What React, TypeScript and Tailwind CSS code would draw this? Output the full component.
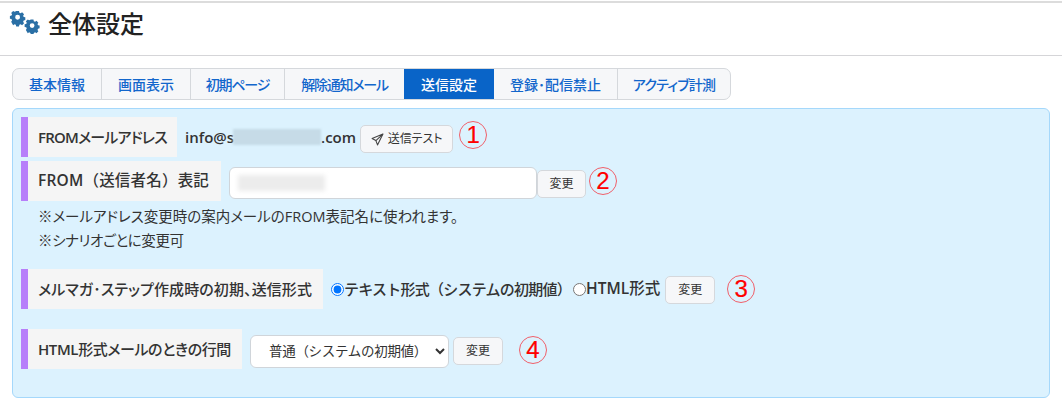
import React from "react";

const font = { fontFamily: '"Open Sans", "Noto Sans CJK JP", sans-serif' };

const tabs = [
  { t: "基本情報", w: "w-[89px]" },
  { t: "画面表示", w: "w-[89px]" },
  { t: "初期ページ", w: "w-[94px] tracking-[-1.2px]" },
  { t: "解除通知メール", w: "w-[119px] tracking-[-1.2px]" },
  { t: "送信設定", w: "w-[90px]", active: true },
  { t: "登録･配信禁止", w: "w-[124px]" },
  { t: "アクティブ計測", w: "w-[112px] tracking-[-0.8px]" },
];

function Label({ children, w, cls }: { children: React.ReactNode; w: string; cls?: string }) {
  return (
    <div className={`h-10 shrink-0 border-l-[7px] border-[#b77ffa] bg-[#f5f5f5] pl-[10px] flex items-center font-medium text-[#333] whitespace-nowrap ${cls ?? ""} ${w}`}>
      <span>{children}</span>
    </div>
  );
}

function Latin({ children }: { children: React.ReactNode }) {
  return <span className="font-semibold">{children}</span>;
}

function Btn({ children, cls }: { children: React.ReactNode; cls?: string }) {
  return (
    <button className={`h-[28px] rounded-[5px] border border-[#d5d8dc] bg-[#f6f7f9] text-[12px] text-[#333] flex items-center justify-center gap-1 [font-feature-settings:"palt"] ${cls ?? "w-[50px]"}`}>
      {children}
    </button>
  );
}

function Num({ children, cls }: { children: React.ReactNode; cls: string }) {
  return (
    <span className={`w-7 h-7 shrink-0 rounded-full border border-[#f0606a] text-[#f00] flex items-center justify-center text-[24px] leading-none [-webkit-text-stroke:0.2px_#f00] ${cls}`} style={{ fontFamily: '"Liberation Sans", sans-serif' }}>
      {children}
    </span>
  );
}

const gear = "M7 0h4l.5 2.4 1.9.8 2-1.3 2.8 2.8-1.3 2 .8 1.900 2.300.4v4l-2.300.5-.8 1.900 1.300 2-2.800 2.800-2-1.300-1.900.8-.5 2.300H7l-.5-2.300-1.900-.8-2 1.300L-.2 15.400l1.300-2-.8-1.900L-2 11V7l2.300-.4.800-1.900-1.300-2L2.600-.1l2 1.300 1.900-.8zM9 5.500a3.500 3.500 0 1 0 0 7 3.500 3.500 0 0 0 0-7z";

function Gears() {
  return (
    <svg width="31" height="24" viewBox="0 0 31 24" className="shrink-0 mt-[1px]" fill="#2a6fa5">
      <path fillRule="evenodd" d={gear} transform="translate(2.300 1) scale(.7)" />
      <path fillRule="evenodd" d={gear} transform="translate(17 9.500) scale(.68)" />
    </svg>
  );
}

export default function App() {
  return (
    <div className="w-[1062px] h-[420px] bg-white overflow-hidden" style={font}>
      <div className="h-[56px] border-b border-[#d5d5d8] relative">
        <div className="h-[3px] border-b-2 border-[#dcdcdc]" />
        <div className="absolute left-[898px] top-[1px] w-[46px] h-[2px] bg-[#dcdcdc]" />
        <div className="flex items-start pl-[9px] pt-[6px]">
          <Gears />
          <h1 className="ml-[8px] text-[24px] leading-[30px] font-medium text-[#222]">全体設定</h1>
        </div>
      </div>

      <div className="mt-3 ml-3 flex w-[719px] h-[32px] rounded-[7px] border border-[#d5d8dc] bg-[#f6f7f9] overflow-hidden">
        {tabs.map((x, i) => (
          <div
            key={x.t}
            className={`shrink-0 flex items-center justify-center text-[14px] font-medium whitespace-nowrap [font-feature-settings:"palt"] ${x.w} ${
              x.active ? "bg-[#0964c8] text-white font-bold" : "text-[#1266cc]"
            } ${i < tabs.length - 1 && !x.active && i !== 3 ? "border-r border-[#d5d8dc]" : ""}`}
          >
            {x.t}
          </div>
        ))}
      </div>

      <div className="mt-2 ml-3 w-[1038px] h-[290px] rounded-[6px] border border-[#a5d8fb] bg-[#dcf2fe] pl-2 pt-2 text-[14px] text-[#333]">
        <div className="flex items-center">
          <Label w="w-[156px]" cls='text-[15px] [font-feature-settings:"palt"] tracking-[-0.8px]'><Latin>FROM</Latin>メールアドレス</Label>
          <span className="ml-2 font-semibold text-[15px] flex items-center">
            info@s
            <span className="w-[88px] h-[16px] bg-[#c6dbe7] -ml-[1px] blur-[1px]" />
            .com
          </span>
          <Btn cls="w-[93px] ml-[4px] mt-1">
            <svg width="13" height="13" viewBox="0 0 24 24" fill="none" stroke="#444" strokeWidth="2" strokeLinejoin="round">
              <path d="M22 2 2 10l7 4 3 8z" />
              <path d="M22 2 9 14" />
            </svg>
            送信テスト
          </Btn>
          <Num cls="ml-[6px] -mt-[4px]">1</Num>
        </div>

        <div className="flex items-center mt-1">
          <Label w="w-[200px]" cls="text-[15.5px] tracking-[0.2px]"><Latin>FROM</Latin>（送信者名）表記</Label>
          <div className="ml-2 w-[308px] h-[32px] rounded-[6px] border border-[#d0d5da] bg-white pl-2 flex items-center mt-[4px]">
            <span className="w-[87px] h-[16px] bg-[#ececec] blur-[2px]" />
          </div>
          <Btn cls="w-[49px] mt-[5px]">変更</Btn>
          <Num cls="ml-[3px] mt-[-1px]">2</Num>
        </div>

        <div className="pl-[17px] pt-[4px] text-[14.5px] leading-[24px] text-[#333] [font-feature-settings:'palt']">
          <p>※メールアドレス変更時の案内メールのFROM表記名に使われます。</p>
          <p className="tracking-[-0.4px]">※シナリオごとに変更可</p>
        </div>

        <div className="flex items-center mt-[16px]">
          <Label w="w-[302px]" cls='text-[15px] [font-feature-settings:"palt"] tracking-[0.1px]'>メルマガ･ステップ作成時の初期、送信形式</Label>
          <label className="ml-2 flex items-center font-medium text-[15px] tracking-[-0.75px] whitespace-nowrap">
            <input type="radio" name="f" defaultChecked className="m-0 w-[13px] h-[13px]" />
            テキスト形式（システムの初期値）
          </label>
          <label className="ml-[2px] flex items-center font-medium text-[15.5px] whitespace-nowrap">
            <input type="radio" name="f" className="m-0 w-[13px] h-[13px]" />
            <Latin>HTML</Latin>形式
          </label>
          <Btn cls="w-[50px] ml-[5px] mt-[1px]">変更</Btn>
          <Num cls="ml-[12px]">3</Num>
        </div>

        <div className="flex items-center mt-[20px]">
          <Label w="w-[221px]" cls='text-[15px] [font-feature-settings:"palt"] tracking-[-0.4px]'><Latin>HTML</Latin>形式メールのときの行間</Label>
          <select className="ml-2 w-[199px] h-[33px] rounded-[6px] border border-[#d0d5da] bg-white pl-[14px] text-[13.5px] tracking-[-0.3px] text-[#333] mt-1" defaultValue="a">
            <option value="a">普通（システムの初期値）</option>
          </select>
          <Btn cls="w-[50px] ml-[4px] mt-1">変更</Btn>
          <Num cls="ml-[16px] mt-[2px]">4</Num>
        </div>
      </div>
    </div>
  );
}
